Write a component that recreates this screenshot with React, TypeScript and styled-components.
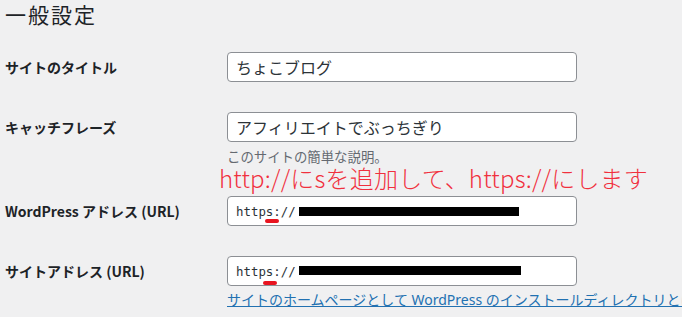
import styled, { createGlobalStyle } from 'styled-components';

const text = "#1d2327";
const muted = "#646970";
const link = "#2271b1";
const border = "#8c8f94";
const annotationRed = "#f0303e";

const GlobalStyle = createGlobalStyle`
  html, body {
    margin: 0;
    padding: 0;
    background: #f0f0f1;
    overflow: hidden;
  }
  body {
    font-family: "Noto Sans CJK JP", "Noto Sans", sans-serif;
    color: ${text};
  }
`;

const Page = styled.div`
  padding-left: 5px;
  width: 677px;
  height: 317px;
  overflow: hidden;
`;

const Title = styled.h1`
  margin: 0 0 8px;
  font-size: 21px;
  letter-spacing: 2px;
  line-height: 29px;
  font-weight: 400;
`;

const Row = styled.div`
  display: grid;
  grid-template-columns: 222px 350px;
  align-items: start;
  padding: 15px 0;
`;

const Label = styled.div`
  font-size: 14px;
  font-weight: 700;
  line-height: 30px;
  white-space: nowrap;
`;

const Field = styled.div`
  position: relative;
`;

const Input = styled.div`
  box-sizing: border-box;
  height: 30px;
  width: 350px;
  background: #fff;
  border: 1px solid ${border};
  border-radius: 4px;
  padding: 0 8px;
  display: flex;
  align-items: center;
  font-size: 16px;
  color: #2c3338;
`;

const Mono = styled.span`
  position: relative;
  font-family: "DejaVu Sans Mono", "Liberation Mono", monospace;
  font-size: 12.4px;
  color: #2c3338;
`;

const Mark = styled.span<{ $left: number; $top: number }>`
  position: absolute;
  left: ${p => p.$left}px;
  top: ${p => p.$top}px;
  width: 14px;
  height: 4px;
  border-radius: 2px;
  background: #e8141f;
`;

const Redacted = styled.span<{ $width: number; $shift: number }>`
  display: inline-block;
  width: ${p => p.$width}px;
  height: 9px;
  margin-left: 3px;
  background: #000;
  transform: translateY(${p => p.$shift}px);
`;

const Description = styled.p`
  margin: 4px 0 0;
  font-size: 13.4px;
  line-height: 20px;
  color: ${muted};
  white-space: nowrap;
`;

const Annotation = styled.div`
  position: absolute;
  left: -8px;
  top: 52px;
  font-size: 24px;
  font-weight: 300;
  line-height: 28px;
  letter-spacing: 0.2px;
  color: ${annotationRed};
  white-space: nowrap;
`;

const HelpLink = styled.a`
  display: block;
  margin-top: 4px;
  font-family: "Noto Sans", "Noto Sans CJK JP", sans-serif;
  font-size: 14px;
  line-height: 20px;
  color: ${link};
  text-decoration: underline;
  white-space: nowrap;
`;

function UrlField({ barWidth, markLeft, markTop, shift }: { barWidth: number; markLeft: number; markTop: number; shift: number }) {
  return (
    <Input>
      <Mono>
        https://
        <Mark $left={markLeft} $top={markTop} />
      </Mono>
      <Redacted $width={barWidth} $shift={shift} />
    </Input>
  );
}

function App() {
  return (
    <Page>
      <GlobalStyle />
      <Title>一般設定</Title>
      <Row>
        <Label>サイトのタイトル</Label>
        <Field>
          <Input>ちょこブログ</Input>
        </Field>
      </Row>
      <Row>
        <Label>キャッチフレーズ</Label>
        <Field>
          <Input>アフィリエイトでぶっちぎり</Input>
          <Description>このサイトの簡単な説明。</Description>
          <Annotation>http://にsを追加して、https://にします</Annotation>
        </Field>
      </Row>
      <Row>
        <Label>WordPress アドレス (URL)</Label>
        <Field>
          <UrlField barWidth={220} markLeft={29} markTop={15} shift={0} />
        </Field>
      </Row>
      <Row>
        <Label>サイトアドレス (URL)</Label>
        <Field>
          <UrlField barWidth={222} markLeft={27} markTop={17} shift={-1} />
          <HelpLink href="#">サイトのホームページとして WordPress のインストールディレクトリとは異なる場所を設定する場合は</HelpLink>
        </Field>
      </Row>
    </Page>
  );
}

export default App;
